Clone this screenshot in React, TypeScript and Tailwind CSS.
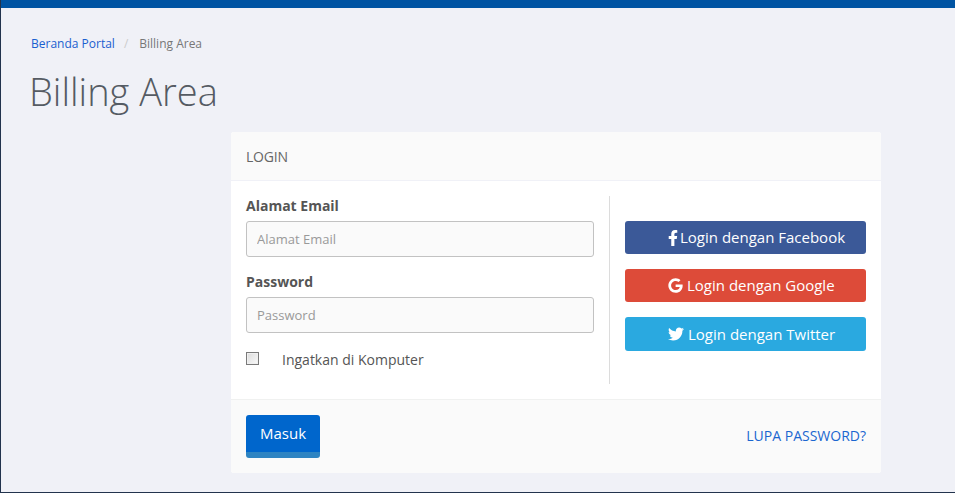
import React from 'react';
import { FaFacebookF, FaGoogle, FaTwitter } from 'react-icons/fa';

const font = 'font-["Open_Sans",sans-serif]';

const socialButtons = [
  { label: 'Login dengan Facebook', icon: <FaFacebookF className="h-[16px] w-[10px]" />, color: 'bg-[#3b5998]', h: 'h-[33px]', gap: 'gap-[2px]' },
  { label: 'Login dengan Google', icon: <FaGoogle className="h-[15px] w-[15px]" />, color: 'bg-[#dd4b39]', h: 'h-[33px]', gap: 'gap-[4px]' },
  { label: 'Login dengan Twitter', icon: <FaTwitter className="h-[16px] w-[16px]" />, color: 'bg-[#2aa9e0]', h: 'h-[34px]', gap: 'gap-[4px]' },
];

const Field: React.FC<{ label: string; type: string }> = ({ label, type }) => (
  <div>
    <label className="block text-[14px] leading-[20px] font-bold text-[#555]">{label}</label>
    <input
      type={type}
      placeholder={label}
      className="mt-[5px] block h-[36px] w-full rounded-[3px] border border-[#c2c2c2] bg-[#fafafa] px-[10px] text-[13px] text-[#555] placeholder:text-[#999] outline-none"
    />
  </div>
);

export default function App() {
  return (
    <div className={`${font} flex h-[493px] w-[955px] flex-col overflow-hidden border-b border-l border-[#22334d] bg-[#f0f1f7]`}>
      <div className="h-2 shrink-0 bg-[#0054a3]" />

      <div className="flex items-center pt-[27px] pl-[30px] text-[12px] leading-[17px]">
        <a className="text-[#1a5fd0]">Beranda Portal</a>
        <span className="ml-[9px] text-[#ccc]">/</span>
        <span className="ml-[11px] text-[#777]">Billing Area</span>
      </div>

      <h1 className="mt-[14px] pl-[28px] text-[38px] leading-[50px] font-light text-[#555b63]">Billing Area</h1>

      <div className="mt-[16px] ml-[230px] w-[650px] rounded-[3px] bg-white">
        <div className="flex h-[49px] items-center rounded-t-[3px] border-b border-[#f0f1f7] bg-[#fafafa] px-[15px] text-[14px] tracking-[-0.2px] text-[#666]">
          LOGIN
        </div>

        <div className="flex h-[218px] px-[15px] pt-[15px]">
          <div className="w-[348px]">
            <div className="flex flex-col gap-[15px]">
              <Field label="Alamat Email" type="email" />
              <Field label="Password" type="password" />
            </div>
            <label className="mt-[17px] flex items-center text-[14px] leading-[20px] text-[#555]">
              <span className="h-[13px] w-[13px] -translate-y-[2px] border border-[#7a7a7a] bg-gradient-to-br from-[#dcdcdc] to-[#fafafa] shadow-[inset_0_0_0_1px_#f0f0f0]" />
              <span className="ml-[23px]">Ingatkan di Komputer</span>
            </label>
          </div>

          <div className="ml-[15px] h-[188px] w-px bg-[#dcdcdc]" />

          <div className="ml-[15px] flex w-[241px] flex-col gap-[15px] pt-[25px]">
            {socialButtons.map((b) => (
              <a
                key={b.label}
                className={`flex ${b.h} ${b.gap} items-center rounded-[3px] pl-[43px] text-[15px] text-white ${b.color}`}
              >
                {b.icon}
                <span>{b.label}</span>
              </a>
            ))}
          </div>
        </div>

        <div className="flex h-[74px] items-center justify-between rounded-b-[3px] border-t border-[#f0f1f0] bg-[#fafafa] px-[15px] pb-[1px]">
          <button className="h-[43px] w-[74px] rounded-[3px] border-b-[6px] border-[#2e84c2] bg-[#0066cc] text-[15px] text-white">
            Masuk
          </button>
          <a className="pb-[1px] text-[14px] text-[#1a66d0]">LUPA PASSWORD?</a>
        </div>
      </div>
    </div>
  );
}
